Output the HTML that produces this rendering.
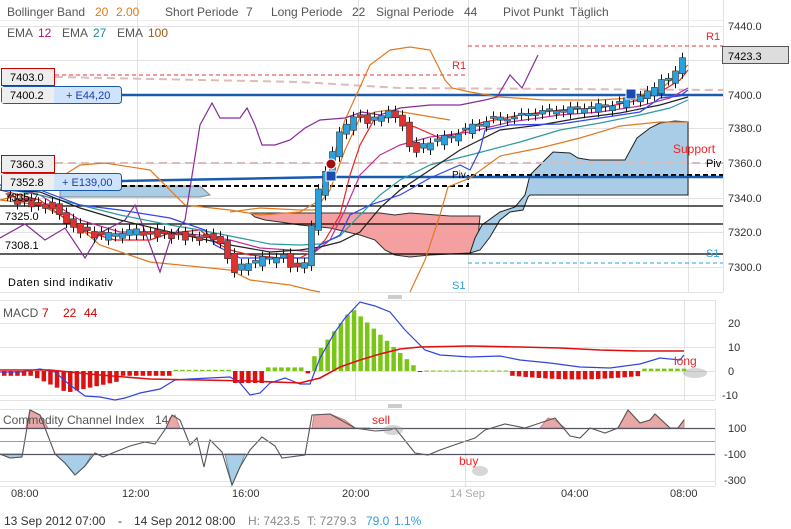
<!DOCTYPE html>
<html><head><meta charset="utf-8"><style>
html,body{margin:0;padding:0;background:#fff;width:791px;height:529px;overflow:hidden}
svg{display:block;font-family:"Liberation Sans",sans-serif}
</style></head><body>
<svg id="s" width="791" height="529" xmlns="http://www.w3.org/2000/svg">
<rect width="791" height="529" fill="#fff"/>
<g stroke="#e2e2e2" stroke-width="1">
<line x1="0" y1="26.5" x2="723" y2="26.5"/><line x1="0" y1="60.5" x2="723" y2="60.5"/>
<line x1="0" y1="128.5" x2="723" y2="128.5"/><line x1="0" y1="163.5" x2="723" y2="163.5"/>
<line x1="0" y1="198.5" x2="723" y2="198.5"/><line x1="0" y1="232.5" x2="723" y2="232.5"/>
<line x1="0" y1="267.5" x2="723" y2="267.5"/>
<line x1="137.5" y1="0" x2="137.5" y2="292"/><line x1="358.5" y1="0" x2="358.5" y2="292"/>
<line x1="468.5" y1="0" x2="468.5" y2="292"/><line x1="578.5" y1="0" x2="578.5" y2="292"/>
<line x1="688.5" y1="0" x2="688.5" y2="292"/><line x1="723.5" y1="0" x2="723.5" y2="292"/>
<line x1="0" y1="292.5" x2="723" y2="292.5"/>
<line x1="0" y1="20.5" x2="723" y2="20.5" stroke="#eee"/>
</g>
<polygon points="60,186 200,186 210,195 200,197 60,197" fill="#a9cde6" stroke="#888" stroke-width="1"/>
<polygon points="250,213 380,213 395,215 410,213 450,216 480,216 478,238 470,253 430,255 410,257 395,255 385,250 375,240 360,235 330,228 300,225 280,222 265,220 255,217" fill="#f5a0a0" stroke="#333" stroke-width="1"/>
<polygon points="470,253 475,238 482,225 500,212 515,207 525,195 530,175 540,165 553,152 570,153 578,158 590,160 625,160 637,138 650,128 660,123 675,121 688,122 688,195 530,195 528,197 523,210 510,212 500,220 490,237 480,250" fill="#a9cde6" stroke="#222" stroke-width="1"/>
<g stroke="#000" stroke-width="1.2">
<line x1="0" y1="206" x2="723" y2="206"/><line x1="0" y1="224" x2="723" y2="224"/><line x1="0" y1="254" x2="723" y2="254"/>
</g>
<line x1="55" y1="75" x2="468" y2="75" stroke="#e33" stroke-dasharray="4,3"/>
<line x1="468" y1="46" x2="723" y2="46" stroke="#e33" stroke-dasharray="4,3"/>
<line x1="468" y1="263" x2="723" y2="263" stroke="#29a0e0" stroke-dasharray="4,3"/>
<polyline points="55,77 300,82 400,88 723,90" fill="none" stroke="#dbb" stroke-width="2" stroke-dasharray="8,5"/>
<line x1="55" y1="163" x2="723" y2="163" stroke="#dbb" stroke-width="2" stroke-dasharray="8,5"/>
<polyline points="122,186 468,186 468,175 723,175" fill="none" stroke="#000" stroke-width="2" stroke-dasharray="5,3"/>
<line x1="122" y1="95" x2="723" y2="95" stroke="#1a5bb0" stroke-width="2.5"/>
<polyline points="122,181 330,177 723,177" fill="none" stroke="#1a5bb0" stroke-width="2.5"/>
<g fill="none" stroke-width="1.2">
<polyline stroke="#e07a20" points="0,200 40,190 80,165 105,163 150,170 185,205 230,210 260,215 300,212 320,200 345,120 370,65 390,50 410,47 430,50 445,80 452,88 470,92 500,97 545,100 600,100 630,98 660,90 688,65"/>
<polyline stroke="#e07a20" points="0,200 40,205 70,220 100,245 150,262 180,265 230,270 250,280 290,285 310,290 320,292"/>
<polyline stroke="#e07a20" points="410,292 425,260 440,215 448,187 470,178 500,156 540,148 580,138 620,126 660,122 688,122"/>
<polyline stroke="#e07a20" points="230,212 260,208 300,210 315,210 330,190 345,150 360,118 375,112 390,110 420,115 450,120"/>
<polyline stroke="#8a2a9a" points="0,238 25,224 45,240 65,228 85,258 100,233 125,220 135,205 150,245 160,272 170,240 185,220 200,125 212,103 220,118 240,118 247,108 255,125 262,145 275,145 290,140 305,128 320,120 345,118 362,112 380,115 400,108 430,105 460,105 485,100 497,97 510,75 522,88 538,55"/>
<polyline stroke="#e22" points="0,190 40,200 60,215 80,230 115,240 150,240 170,233 200,230 215,242 230,250 250,255 280,258 300,258 315,250 325,240 340,215 350,175 360,145 375,118 400,117 405,125 415,127 440,138 460,133 480,123 520,115 560,110 600,108 640,100 660,92 680,80 688,70"/>
<polyline stroke="#c03090" points="0,185 40,195 80,220 120,232 170,232 200,235 230,240 260,248 290,250 315,252 330,240 345,210 360,175 380,155 400,145 430,137 470,132 510,122 560,115 600,112 640,106 670,98 688,88"/>
<polyline stroke="#2a9aa0" points="0,188 40,195 80,205 120,215 170,225 200,230 240,238 270,244 300,245 320,244 340,236 360,215 380,195 400,180 430,165 470,155 520,142 560,130 600,123 640,115 670,108 688,100"/>
<polyline stroke="#222" points="0,190 40,192 80,208 120,220 170,232 230,245 270,252 300,250 320,247 340,242 360,232 380,208 400,190 430,170 460,150 500,130 540,125 580,118 620,113 660,105 688,97"/>
<polyline stroke="#3344ee" points="0,185 40,190 80,205 120,210 170,218 205,230 215,245 240,258 280,258 310,258 320,245 340,235 350,215 370,205 400,195 430,178 460,165 470,170 480,150 485,130 510,125 560,124 600,118 640,112 660,98 680,96 688,90"/>
</g>
<g id="candles"></g>
<circle cx="331" cy="164" r="5" fill="#a01010" stroke="#fff"/>
<rect x="326" y="171" width="10" height="10" fill="#1a4bb0" stroke="#fff"/>
<rect x="626" y="89" width="10" height="10" fill="#1a4bb0" stroke="#fff"/>
<rect x="1.5" y="68.5" width="53" height="17" fill="#eee" stroke="#c00"/>
<text x="10" y="81" font-size="11" fill="#000">7403.0</text>
<rect x="1.5" y="86.5" width="120" height="17" rx="3" fill="#cfe3fb" stroke="#1a5bb0"/>
<rect x="2" y="87" width="52" height="16" fill="#eee"/>
<text x="10" y="99" font-size="11">7400.2</text><text x="66" y="99" font-size="11" fill="#1a3fb0">+ E44,20</text>
<rect x="1.5" y="155.5" width="53" height="17" fill="#eee" stroke="#c00"/>
<text x="10" y="168" font-size="11">7360.3</text>
<rect x="1.5" y="173.5" width="120" height="17" rx="3" fill="#cfe3fb" stroke="#1a5bb0"/>
<rect x="2" y="174" width="52" height="16" fill="#eee"/>
<text x="10" y="186" font-size="11">7352.8</text><text x="62" y="186" font-size="11" fill="#1a3fb0">+ E139,00</text>
<text x="5" y="201" font-size="11">7335.7</text>
<text x="5" y="220" font-size="11">7325.0</text>
<text x="5" y="249" font-size="11">7308.1</text>
<text x="8" y="286" font-size="11" letter-spacing=".5">Daten sind indikativ</text>
<text x="452" y="69" font-size="11" fill="#e22">R1</text>
<text x="706" y="40" font-size="11" fill="#e22">R1</text>
<text x="452" y="289" font-size="11" fill="#29a0e0">S1</text>
<text x="706" y="257" font-size="11" fill="#29a0e0">S1</text>
<text x="452" y="178" font-size="10">Piv</text>
<text x="673" y="153" font-size="12" fill="#e22">Support</text>
<text x="706" y="167" font-size="11">Piv</text>
<g font-size="12" fill="#555">
<text x="7" y="16">Bollinger Band</text><text x="95" y="16" fill="#e07a20">20</text><text x="116" y="16" fill="#e07a20">2.00</text>
<text x="165" y="16">Short Periode</text><text x="246" y="16">7</text>
<text x="271" y="16">Long Periode</text><text x="352" y="16">22</text>
<text x="376" y="16">Signal Periode</text><text x="464" y="16">44</text>
<text x="503" y="16">Pivot Punkt</text><text x="570" y="16">Täglich</text>
<text x="7" y="37">EMA</text><text x="38" y="37" fill="#b0107a">12</text>
<text x="62" y="37">EMA</text><text x="93" y="37" fill="#1a8a9a">27</text>
<text x="117" y="37">EMA</text><text x="148" y="37" fill="#9a5a10">100</text>
</g>
<g font-size="11" fill="#333">
<text x="728" y="30">7440.0</text><text x="728" y="99">7400.0</text><text x="728" y="132">7380.0</text>
<text x="728" y="167">7360.0</text><text x="728" y="202">7340.0</text><text x="728" y="236">7320.0</text><text x="728" y="271">7300.0</text>
</g>
<rect x="722.5" y="46.5" width="66" height="17" fill="#ddd" stroke="#555"/>
<text x="728" y="60" font-size="11">7423.3</text>
<g stroke="#999"><line x1="388" y1="296" x2="402" y2="296"/><line x1="388" y1="298" x2="402" y2="298"/><line x1="388" y1="405" x2="402" y2="405"/><line x1="388" y1="407" x2="402" y2="407"/></g>
<g stroke="#e2e2e2">
<line x1="0" y1="300.5" x2="715" y2="300.5"/><line x1="0" y1="323.5" x2="715" y2="323.5"/><line x1="0" y1="347.5" x2="715" y2="347.5"/>
<line x1="0" y1="371.5" x2="715" y2="371.5"/><line x1="0" y1="395.5" x2="715" y2="395.5"/><line x1="0" y1="400.5" x2="715" y2="400.5"/>
<line x1="355.5" y1="300" x2="355.5" y2="400"/><line x1="465.5" y1="300" x2="465.5" y2="400"/><line x1="684.5" y1="300" x2="684.5" y2="400"/><line x1="715.5" y1="300" x2="715.5" y2="400"/>
</g>
<g id="bars"></g>
<polyline fill="none" stroke="#3344dd" stroke-width="1.2" points="0,372 20,372 40,369 55,372 70,385 85,396 100,397 115,400 125,398 140,393 160,389 175,380 190,379 210,378 230,377 240,383 250,395 260,393 270,383 285,378 300,384 310,384 320,358 335,332 345,318 360,302 375,306 390,312 405,330 425,350 440,355 470,357 500,356 520,360 550,363 580,367 610,368 640,364 660,358 680,360 684,355"/>
<polyline fill="none" stroke="#dd1111" stroke-width="1.6" points="0,370 50,370 100,375 150,379 200,380 250,381 300,383 320,378 340,367 360,360 380,354 400,349 420,347 470,346 520,347 560,348 600,350 640,351 684,351"/>
<g font-size="12"><text x="3" y="317" fill="#555">MACD</text><text x="42" y="317" fill="#c00">7</text><text x="63" y="317" fill="#c00">22</text><text x="84" y="317" fill="#c00">44</text></g>
<text x="674" y="365" font-size="12" fill="#e22">long</text>
<ellipse cx="695" cy="373" rx="12" ry="5" fill="#999" opacity=".4"/>
<g font-size="11" fill="#333"><text x="728" y="327">20</text><text x="728" y="351">10</text><text x="728" y="375">0</text><text x="722" y="399">-10</text></g>
<g stroke="#e2e2e2"><line x1="0" y1="409.5" x2="715" y2="409.5"/><line x1="0" y1="481.5" x2="715" y2="481.5"/><line x1="0" y1="486.5" x2="715" y2="486.5"/>
<line x1="465.5" y1="409" x2="465.5" y2="486"/><line x1="715.5" y1="409" x2="715.5" y2="486"/></g>
<polygon fill="#e8a8a8" stroke="#d08080" points="26,428 30,410 40,415 48,428"/>
<polygon fill="#e8a8a8" stroke="#d08080" points="166,428 170,418 175,415 180,428"/>
<polygon fill="#e8a8a8" stroke="#d08080" points="312,428 314,415 330,414 345,420 355,428 370,428"/>
<polygon fill="#e8a8a8" stroke="#d08080" points="540,428 548,418 555,420 565,428"/>
<polygon fill="#e8a8a8" stroke="#d08080" points="618,428 628,410 640,423 650,420 655,414 670,428 678,428 684,420 684,428"/>
<polygon fill="#a8cfea" stroke="#79a" points="0,454 10,458 22,457 22,454"/>
<polygon fill="#a8cfea" stroke="#79a" points="55,454 65,463 75,475 85,466 92,454"/>
<polygon fill="#a8cfea" stroke="#79a" points="225,454 232,485 240,467 245,454"/>
<polyline fill="none" stroke="#555" stroke-width="1.1" points="0,454 10,458 22,457 30,410 40,415 55,454 65,463 75,475 85,466 95,453 103,457 115,452 130,446 145,442 155,444 166,428 172,415 180,420 190,445 197,438 204,467 210,440 222,452 232,485 240,467 250,450 262,437 275,446 282,458 305,455 312,415 330,414 355,428 375,431 390,430 395,428 415,453 428,455 440,450 460,443 475,438 485,430 505,424 525,428 540,423 555,418 570,436 580,438 590,428 605,433 618,428 628,410 640,423 650,420 655,414 670,428 678,428 684,420"/>
<line x1="0" y1="428.5" x2="715" y2="428.5" stroke="#556" stroke-width="1.2"/>
<line x1="0" y1="441.5" x2="715" y2="441.5" stroke="#99a"/>
<line x1="0" y1="454.5" x2="715" y2="454.5" stroke="#556" stroke-width="1.2"/>
<text x="3" y="424" font-size="12" fill="#555">Commodity Channel Index</text><text x="155" y="424" font-size="12" fill="#555">14</text>
<text x="372" y="424" font-size="12" fill="#e22">sell</text>
<text x="459" y="465" font-size="12" fill="#e22">buy</text>
<ellipse cx="393" cy="430" rx="10" ry="5" fill="#999" opacity=".4"/>
<ellipse cx="480" cy="471" rx="8" ry="5" fill="#999" opacity=".4"/>
<g font-size="11" fill="#333"><text x="728" y="432">100</text><text x="724" y="458">-100</text><text x="724" y="484">-300</text></g>
<g font-size="11" fill="#333"><text x="11" y="497">08:00</text><text x="122" y="497">12:00</text><text x="232" y="497">16:00</text><text x="342" y="497">20:00</text><text x="450" y="497" fill="#aaa">14 Sep</text><text x="561" y="497">04:00</text><text x="670" y="497">08:00</text></g>
<g font-size="12"><text x="4" y="525" fill="#333">13 Sep 2012 07:00</text><text x="118" y="525" fill="#333">-</text><text x="134" y="525" fill="#333">14 Sep 2012 08:00</text><text x="248" y="525" fill="#888">H: 7423.5</text><text x="307" y="525" fill="#888">T: 7279.3</text><text x="366" y="525" fill="#29a0e0">79.0</text><text x="394" y="525" fill="#29a0e0">1.1%</text></g>
</svg>
<script>
(function(){
var NS="http://www.w3.org/2000/svg";
function el(p,t,a){var e=document.createElementNS(NS,t);for(var k in a)e.setAttribute(k,a[k]);p.appendChild(e);return e;}
var P=[[10,195],[30,200],[60,205],[80,225],[110,235],[140,230],[170,232],[200,235],[225,235],[240,268],[255,262],[270,258],[290,255],[300,265],[315,260],[320,205],[330,175],[345,135],[360,115],[375,118],[395,112],[408,115],[412,140],[420,148],[440,140],[460,135],[480,125],[500,118],[520,117],[540,112],[560,110],[580,108],[600,106],[620,104],[640,97],[660,90],[670,75],[680,80],[686,58]];
function f(x){for(var i=0;i<P.length-1;i++){if(x<=P[i+1][0]){var t=(x-P[i][0])/(P[i+1][0]-P[i][0]);return P[i][1]+t*(P[i+1][1]-P[i][1]);}}return P[P.length-1][1];}
var g=document.getElementById("candles");
for(var x=10,i=0;x<=686;x+=7,i++){
 var a=f(x),b=f(x+7),up=b<a,s=Math.sin(i*1.7)*6;
 var t0=Math.min(a,b)+s*.3,b0=Math.max(a,b)+Math.abs(s);if(b0-t0<2)b0=t0+2;
 if(x>=450&&x<640&&i%2)b0=t0+2;
 el(g,"line",{x1:x+.5,y1:t0-5,x2:x+.5,y2:b0+5,stroke:"#111","stroke-width":1});
 el(g,"rect",{x:x-2.5,y:t0,width:6,height:b0-t0,fill:up?"#2aa0dd":"#e03030",stroke:"#333","stroke-width":.6});
}
var bg=document.getElementById("bars");
function m(x){
 if(x<30)return -2;if(x<65)return -2-(x-30)/35*7;if(x<120)return -9+(x-65)/55*5;if(x<170)return -2;
 if(x<230)return 0.5;if(x<265)return -5;if(x<300)return 1.5;if(x<310)return -1;
 if(x<350)return 5+(x-310)/40*21;if(x<420)return 26-(x-350)/70*27;if(x<510)return 0.2;
 if(x<640)return -2-Math.sin((x-510)/130*Math.PI)*1.5;return 1;}
for(var x=2;x<=684;x+=6.6){var v=m(x);var y0=371,h=Math.abs(v)*2.4;
 el(bg,"rect",{x:x,y:v>0?y0-h:y0,width:4.5,height:Math.max(h,1),fill:v>0?"#7ac614":"#dd1111"});}
})();
</script>
</body></html>
